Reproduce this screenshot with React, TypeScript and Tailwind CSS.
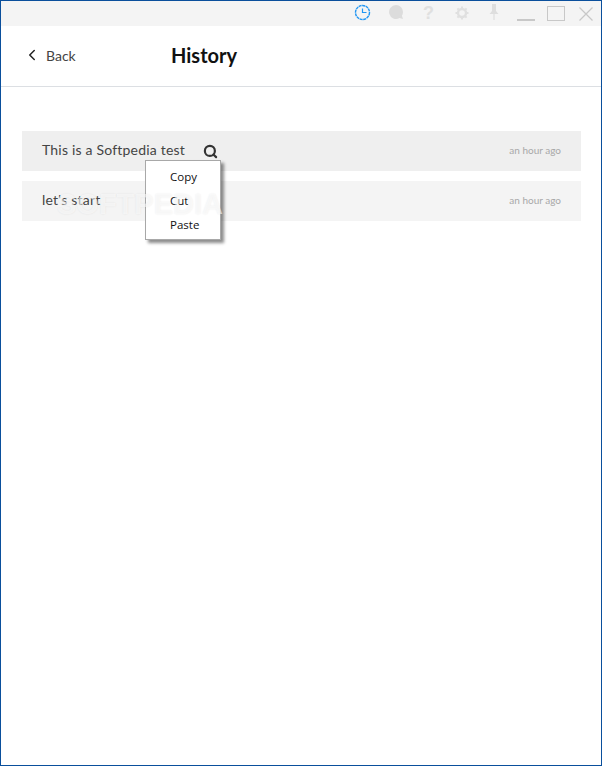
import { ChevronLeft, Search } from 'lucide-react';

function ToolbarIcons() {
  return (
    <div className="flex h-[25px] items-center justify-end bg-[#f4f4f4]">
      {/* clock */}
      <svg className="absolute left-[353px] top-[3px]" width="17" height="17" viewBox="0 0 17 17" fill="none">
        <circle cx="8.5" cy="8.5" r="7" stroke="#2196f3" strokeWidth="1.4" strokeDasharray="3 0.6" />
        <path d="M8.500 4.500V8.500H12.500" stroke="#2196f3" strokeWidth="1.200" />
      </svg>
      {/* chat */}
      <svg className="absolute left-[387px] top-[3px]" width="16" height="16" viewBox="0 0 16 16" fill="#dcdcdc">
        <path d="M8 1a7 7 0 0 1 7 7c0 1.500-.4 2.800-1.100 3.800L15 15l-3.500-.9A7 7 0 1 1 8 1z" />
      </svg>
      {/* help */}
      <span className="absolute left-[422px] top-[0px] font-['Liberation_Sans',sans-serif] text-[18px] leading-[24px] font-bold text-[#e0e0e0]">?</span>
      {/* gear */}
      <svg className="absolute left-[454px] top-[5px]" width="14" height="14" viewBox="0 0 14 14" fill="none">
        <circle cx="7" cy="7" r="4" stroke="#e0e0e0" strokeWidth="2.400" />
        <path d="M7 0.500v2M7 11.500v2M0.500 7h2M11.500 7h2M2.400 2.400l1.400 1.400M10.200 10.200l1.400 1.400M11.600 2.400l-1.400 1.400M3.800 10.200l-1.400 1.400" stroke="#e0e0e0" strokeWidth="2" />
      </svg>
      {/* pin */}
      <svg className="absolute left-[487px] top-[3px]" width="12" height="17" viewBox="0 0 12 17" fill="#dedede">
        <path d="M4 0h4v7l2.500 3h-9L4 7zM5.400 10h1.200v6H5.400z" />
      </svg>
      {/* minimize */}
      <div className="absolute left-[516px] top-[18px] h-[2px] w-[18px] bg-[#c8c8c8]" />
      {/* maximize */}
      <div className="absolute left-[546px] top-[5px] h-[15px] w-[18px] border border-[#c8c8c8]" />
      {/* close */}
      <svg className="absolute left-[578px] top-[6px]" width="14" height="14" viewBox="0 0 14 14" fill="none">
        <path d="M0.500 0.500L13.500 13.500M13.500 0.500L0.500 13.500" stroke="#c8c8c8" strokeWidth="1.300" />
      </svg>
    </div>
  );
}

const rows = [
  { text: 'This is a Softpedia test', bg: 'bg-[#efefef]' },
  { text: "let's start", bg: 'bg-[#f4f4f4]' },
];

export default function App() {
  return (
    <div className="relative flex h-[766px] w-[602px] flex-col border border-[#0a4f9c] bg-white font-['Lato','Noto_Sans',sans-serif]">
      <ToolbarIcons />

      {/* Header */}
      <div className="flex h-[61px] items-center border-b border-[#dcdfe3] pb-[2px]">
        <div className="flex w-[170px] items-center pl-[22px] text-[#444]">
          <ChevronLeft size={18} strokeWidth={2} className="text-[#222]" />
          <span className="ml-[5px] text-[14px]">Back</span>
        </div>
        <h1 className="text-[20px] font-bold text-[#111]">History</h1>
      </div>

      {/* History list */}
      <div className="mt-[44px] flex flex-col gap-[10px] pl-[21px] pr-[20px]">
        {rows.map((row, index) => (
          <div key={index} className={`flex h-[40px] items-center justify-between pb-[2px] pl-[20px] pr-[20px] ${row.bg}`}>
            <div className="flex items-center">
              <span className="pb-[2px] text-[14px] tracking-[0.2px] text-[#444]">{row.text}</span>
              {index === 0 && <Search size={15} strokeWidth={3.5} className="ml-[18px] mt-[2px] text-[#333]" />}
            </div>
            <span className="text-[10px] text-[#a8a8a8]">an hour ago</span>
          </div>
        ))}
      </div>

      {/* Context menu */}
      <div className="absolute left-[144px] top-[159px] flex h-[80px] w-[76px] flex-col justify-center border border-[#a8a8a8] bg-white pl-[24px] pt-[2px] font-['Open_Sans','Noto_Sans',sans-serif] text-[11.5px] leading-[24px] text-[#111] shadow-[3px_3px_3px_rgba(0,0,0,0.45)]">
        <div>Copy</div>
        <div>Cut</div>
        <div>Paste</div>
      </div>

      {/* Watermark */}
      <div className="absolute left-[56px] top-[186px] font-['Liberation_Sans',sans-serif] text-[29px] leading-[34px] font-bold text-white/60 [text-shadow:0_0_2px_rgba(0,0,0,0.08)]">
        SOFTPEDIA
      </div>
    </div>
  );
}
